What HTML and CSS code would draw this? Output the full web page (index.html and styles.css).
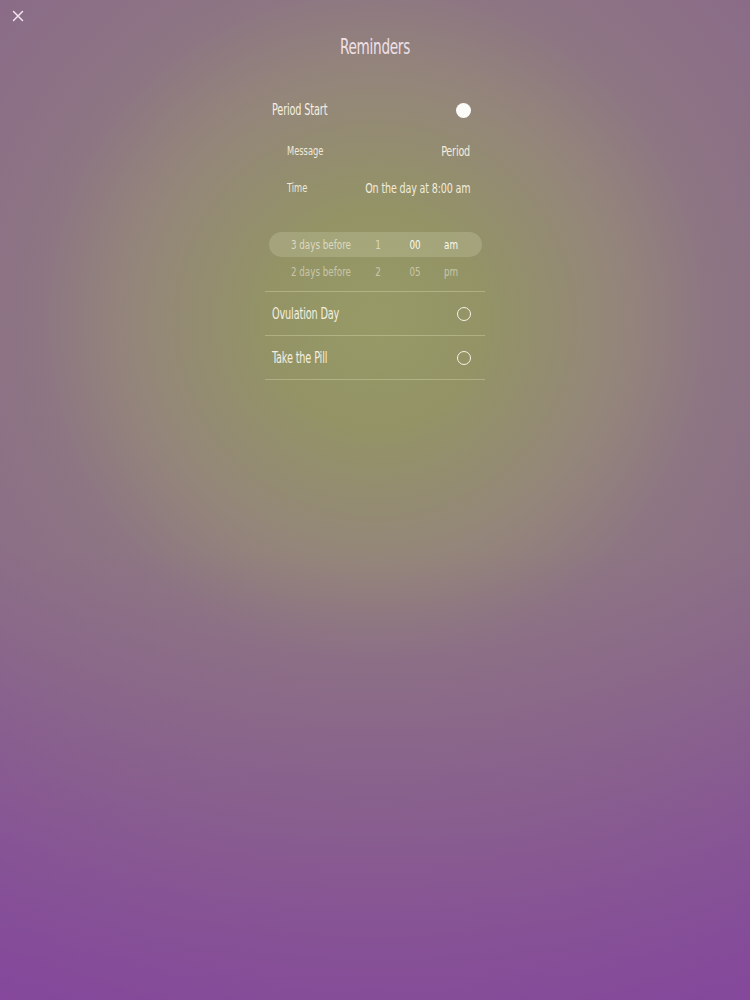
FILE: index.html
```html
<!DOCTYPE html>
<html>
<head>
<meta charset="utf-8">
<link rel="stylesheet" href="styles.css">
</head>
<body>
<div class="screen">
  <button class="close" aria-label="Close">
    <svg width="12" height="12" viewBox="0 0 12 12"><path d="M1.5 1.5L10.5 10.5M10.5 1.5L1.5 10.5" stroke="#f3e3f0" stroke-width="1.5" stroke-linecap="round"/></svg>
  </button>
  <h1 class="title">Reminders</h1>
  <div class="list">
    <div class="row">
      <span class="label">Period Start</span>
      <span class="dot filled"></span>
    </div>
    <div class="sub">
      <span class="sub-label">Message</span>
      <span class="sub-value">Period</span>
    </div>
    <div class="sub">
      <span class="sub-label">Time</span>
      <span class="sub-value">On the day at 8:00 am</span>
    </div>
    <div class="picker">
      <div class="prow selected">
        <span class="c1">3 days before</span>
        <span class="c2">1</span>
        <span class="c3 strong">00</span>
        <span class="c4 strong">am</span>
      </div>
      <div class="prow">
        <span class="c1">2 days before</span>
        <span class="c2">2</span>
        <span class="c3">05</span>
        <span class="c4">pm</span>
      </div>
    </div>
    <div class="row bordered">
      <span class="label">Ovulation Day</span>
      <span class="dot"></span>
    </div>
    <div class="row bordered last">
      <span class="label">Take the Pill</span>
      <span class="dot"></span>
    </div>
  </div>
</div>
</body>
</html>
```

FILE: styles.css
```css
html, body {
  margin: 0;
  padding: 0;
}
body {
  width: 750px;
  height: 1000px;
  overflow: hidden;
  font-family: "DejaVu Sans Condensed", "DejaVu Sans", sans-serif;
  font-stretch: condensed;
  color: #f2ede0;
}
.screen {
  position: relative;
  width: 750px;
  height: 1000px;
  background:
    linear-gradient(to bottom, rgba(130, 60, 160, 0) 55%, rgba(130, 55, 160, 0.4) 100%),
    radial-gradient(circle at 375px 320px, #979a66 0px, #939366 110px, #94867a 240px, #8d7583 340px, #8a6b88 500px, #85509a 800px);
}
.close {
  position: absolute;
  left: 12px;
  top: 10px;
  width: 12px;
  height: 12px;
  padding: 0;
  margin: 0;
  border: 0;
  background: none;
  display: flex;
}
.title {
  margin: 0;
  padding-top: 34px;
  height: 26px;
  line-height: 26px;
  text-align: center;
  font-weight: normal;
  font-size: 21px;
  letter-spacing: -0.4px;
  color: #efe0e6;
  transform: scaleX(0.72);
}
.list {
  width: 220px;
  margin: 28px auto 0;
}
.row {
  height: 44px;
  display: flex;
  align-items: center;
  justify-content: space-between;
  padding: 0 14px 0 7px;
}
.row.bordered {
  border-top: 1px solid rgba(235, 235, 200, 0.32);
  height: 43px;
}
.row.last {
  border-bottom: 1px solid rgba(235, 235, 200, 0.32);
}
.label {
  display: inline-block;
  font-size: 15px;
  letter-spacing: -0.2px;
  color: #f4efe0;
  transform: scaleX(0.72);
  transform-origin: left center;
}
.dot {
  width: 14px;
  height: 14px;
  border-radius: 50%;
  border: 1.5px solid #f5f2e6;
  box-sizing: border-box;
}
.dot.filled {
  background: #fbfbf8;
  width: 15px;
  height: 15px;
  border: 0;
}
.sub {
  height: 37px;
  display: flex;
  align-items: center;
  justify-content: space-between;
  padding: 0 15px 0 22px;
}
.sub-label {
  display: inline-block;
  font-size: 13px;
  color: #efe9da;
  transform: scaleX(0.71);
  transform-origin: left center;
}
.sub-value {
  display: inline-block;
  font-size: 14px;
  letter-spacing: -0.2px;
  color: #f2ecdc;
  transform: scaleX(0.76);
  transform-origin: right center;
}
.picker {
  padding: 26px 3px 7px 4px;
}
.prow {
  display: grid;
  grid-template-columns: 82px 54px 20px 52px;
  height: 26px;
  align-items: center;
  font-size: 12.5px;
  color: rgba(245, 240, 225, 0.55);
}
.prow.selected {
  height: 25px;
  border-radius: 13px;
  background: rgba(235, 235, 205, 0.2);
  color: rgba(245, 240, 225, 0.7);
  margin-bottom: 1px;
}
.c1 {
  text-align: right;
  transform: scaleX(0.78);
  transform-origin: right center;
}
.c2, .c3, .c4 {
  text-align: center;
  transform: scaleX(0.78);
  transform-origin: center center;
}
.strong { color: #fbf8ee; }
```
